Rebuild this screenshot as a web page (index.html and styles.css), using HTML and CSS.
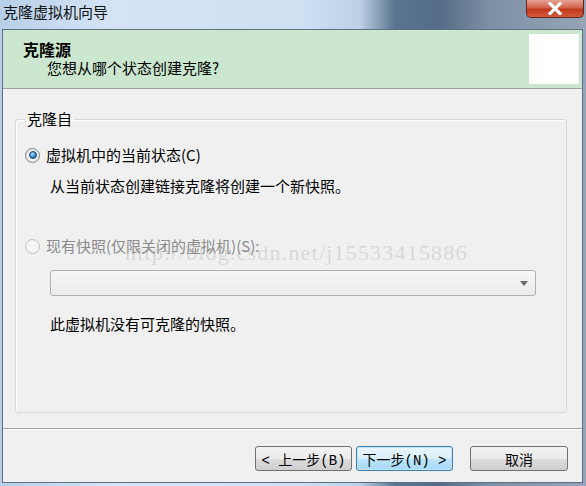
FILE: index.html
```html
<!DOCTYPE html>
<html lang="zh-CN">
<head>
    <meta charset="UTF-8">
    <title>克隆虚拟机向导</title>
    <link rel="stylesheet" href="styles.css">
</head>
<body>
    <div class="window">
        <div class="titlebar">
            <span class="title">克隆虚拟机向导</span>
            <span class="close">
                <svg width="20" height="13" viewBox="0 0 20 13">
                    <path d="M5 1.5 L15 11.5 M15 1.5 L5 11.5" stroke="#fff" stroke-width="3.2" stroke-linecap="square"/>
                </svg>
            </span>
        </div>

        <div class="client">
            <div class="header">
                <div class="header-text">
                    <div class="header-title">克隆源</div>
                    <div class="header-sub">您想从哪个状态创建克隆?</div>
                </div>
                <div class="header-icon"></div>
            </div>

            <div class="content">
                <fieldset class="group">
                    <legend>克隆自</legend>

                    <div class="option">
                        <span class="radio checked"></span>
                        <span>虚拟机中的当前状态(C)</span>
                    </div>
                    <div class="hint first-hint">从当前状态创建链接克隆将创建一个新快照。</div>

                    <div class="option disabled second-option">
                        <span class="radio"></span>
                        <span>现有快照(仅限关闭的虚拟机)(S):</span>
                    </div>
                    <div class="combo">
                        <span class="arrow"></span>
                    </div>
                    <div class="hint note">此虚拟机没有可克隆的快照。</div>
                </fieldset>
                <div class="watermark">http://blog.csdn.net/j15533415886</div>
            </div>

            <div class="footer">
                <button class="btn">&lt; 上一步(B)</button>
                <button class="btn focused">下一步(N) &gt;</button>
                <button class="btn cancel">取消</button>
            </div>
        </div>
    </div>
</body>
</html>
```

FILE: styles.css
```css
body {
    margin: 0;
    font-family: "Noto Sans CJK SC", "Liberation Sans", sans-serif;
    font-size: 15px;
    color: #000;
}
.window {
    width: 586px;
    height: 486px;
    display: flex;
    flex-direction: column;
    background: linear-gradient(90deg, #b7cfe9 0, #d4e4f5 110px, #cfe0f3 300px, #bcd0e6 360px, #5b7590 395px, #546c86 440px, #7e90a5 490px, #95a4b6 586px);
    box-sizing: border-box;
}
.titlebar {
    height: 29px;
    display: flex;
    justify-content: space-between;
    align-items: flex-start;
    flex-shrink: 0;
}
.title {
    margin: 2px 0 0 3px;
    line-height: 20px;
    color: #111;
}
.close {
    width: 58px;
    height: 18px;
    margin-right: 2px;
    border: 1px solid #5a2a20;
    border-top: none;
    border-radius: 0 0 5px 5px;
    background: linear-gradient(#e8a493 0, #d2634b 45%, #c1381c 55%, #d55a3c 100%);
    display: flex;
    align-items: center;
    justify-content: center;
    box-sizing: border-box;
}
.client {
    flex: 1;
    margin: 0 3px 3px 2px;
    border: 1px solid #5d6f82;
    background: #f0f0f0;
    display: flex;
    flex-direction: column;
}
.header {
    height: 58px;
    background: #cce7cf;
    border-bottom: 1px solid #a0a0a0;
    display: flex;
    justify-content: space-between;
    flex-shrink: 0;
}
.header-text {
    padding: 9px 0 0 20px;
}
.header-title {
    font-weight: bold;
    font-size: 16px;
    line-height: 20px;
}
.header-sub {
    margin-left: 24px;
    line-height: 18px;
}
.header-icon {
    width: 50px;
    height: 50px;
    margin: 4px 3px 0 0;
    background: #fff;
}
.content {
    flex: 1;
    position: relative;
    padding: 20px 15px 15px 12px;
    border-bottom: 1px solid #a0a0a0;
    display: flex;
    flex-direction: column;
}
.group {
    flex: 1;
    margin: 0;
    padding: 16px 10px 0 9px;
    border: 1px solid #d5d9dc;
    border-radius: 3px;
    box-shadow: inset 1px 1px 0 #fff;
}
.group legend {
    padding: 0 2px;
    margin-left: 0;
    line-height: 20px;
}
.option {
    display: flex;
    align-items: center;
    gap: 6px;
    line-height: 20px;
}
.radio {
    width: 15px;
    height: 15px;
    border-radius: 50%;
    border: 1px solid #7f8386;
    background: radial-gradient(circle, #ffffff 0, #ececec 60%, #cfcfcf 100%);
    box-sizing: border-box;
    display: flex;
    align-items: center;
    justify-content: center;
    flex-shrink: 0;
}
.radio.checked::after {
    content: "";
    width: 8px;
    height: 8px;
    border-radius: 50%;
    border: 1px solid #1b3f66;
    box-sizing: border-box;
    background: radial-gradient(circle at 40% 35%, #b4defa 0, #4b9bd9 45%, #1a5590 100%);
}
.disabled {
    color: #8b8b8b;
}
.disabled .radio {
    border-color: #bdbdbd;
    background: #f5f5f5;
}
.hint {
    margin-left: 25px;
    line-height: 20px;
}
.first-hint {
    margin-top: 11px;
}
.second-option {
    margin-top: 40px;
}
.combo {
    margin: 14px 20px 0 25px;
    height: 26px;
    border: 1px solid #b0b0b0;
    border-radius: 3px;
    background: linear-gradient(#f6f6f6, #ececec);
    box-sizing: border-box;
    display: flex;
    justify-content: flex-end;
    align-items: center;
    padding-right: 7px;
}
.arrow {
    width: 0;
    height: 0;
    border-left: 4px solid transparent;
    border-right: 4px solid transparent;
    border-top: 5px solid #6b6b6b;
}
.note {
    margin-top: 18px;
}
.watermark {
    position: absolute;
    left: 122px;
    top: 151px;
    font-family: "Liberation Serif", serif;
    font-size: 22px;
    color: rgba(150, 150, 150, 0.28);
    letter-spacing: 1.2px;
}
.footer {
    height: 53px;
    border-top: 1px solid #ffffff;
    display: flex;
    justify-content: flex-end;
    align-items: flex-start;
    padding: 16px 14px 0 0;
    box-sizing: border-box;
    flex-shrink: 0;
}
.btn {
    width: 97px;
    height: 25px;
    margin-left: 4px;
    border: 1px solid #707070;
    border-radius: 3px;
    background: linear-gradient(#f2f2f2 0, #ebebeb 50%, #dddddd 51%, #cfcfcf 100%);
    font-family: "Liberation Mono", "Noto Sans CJK SC", monospace;
    font-size: 14px;
    color: #000;
    padding: 0;
}
.btn.focused {
    border-color: #3c7fb1;
    background: linear-gradient(#eaf6fd 0, #d9f0fc 50%, #bee6fd 51%, #a7d9f5 100%);
    box-shadow: inset 0 0 0 1px #c4e5f6;
}
.btn.cancel {
    margin-left: 17px;
    width: 98px;
}
```
